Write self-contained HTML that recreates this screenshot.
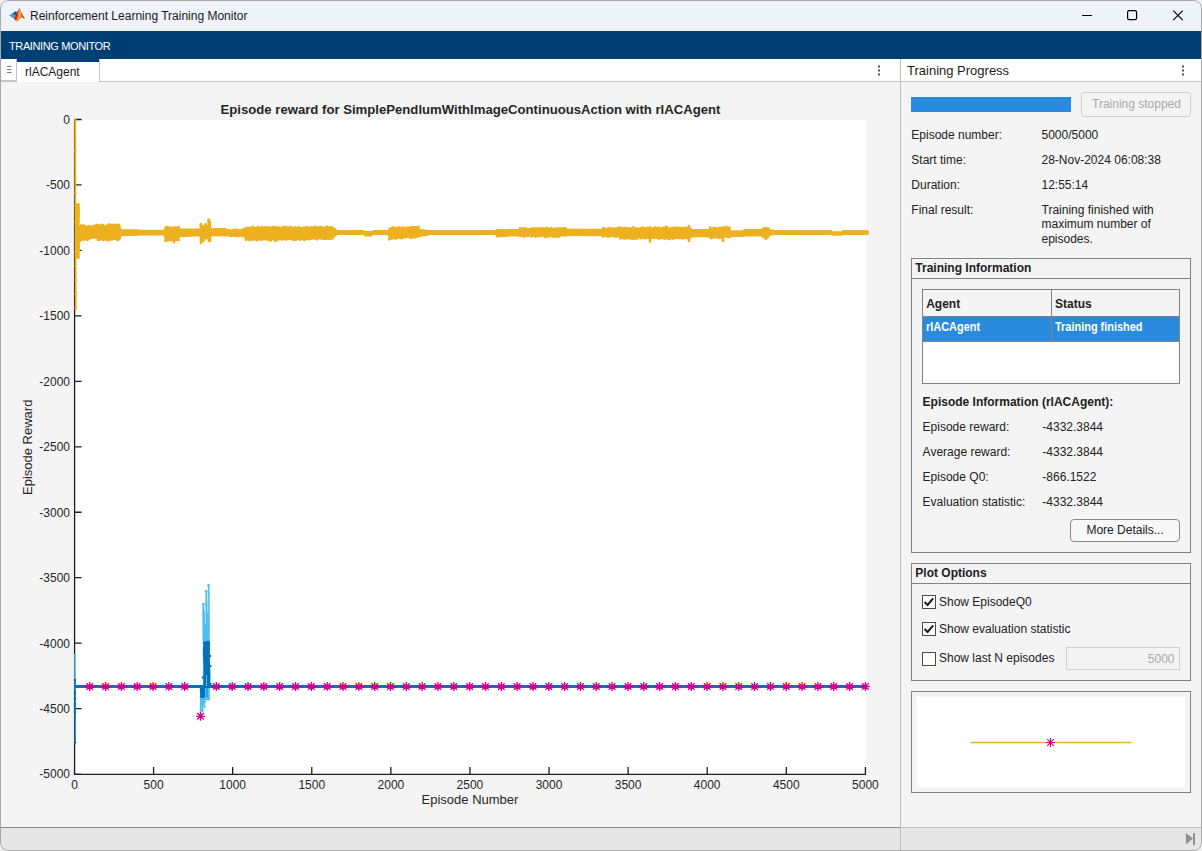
<!DOCTYPE html>
<html><head><meta charset="utf-8">
<style>
*{margin:0;padding:0;box-sizing:border-box}
html,body{width:1202px;height:851px;overflow:hidden;background:#efefef;font-family:"Liberation Sans",sans-serif;color:#212121}
.a{position:absolute}
#win{position:absolute;left:0;top:0;width:1202px;height:851px;background:#f4f4f4;overflow:hidden;border-radius:8px 8px 8px 8px}
.t12{position:absolute;font-size:12px;white-space:nowrap;color:#212121;line-height:14px}
</style></head><body>
<div id="win">
  <!-- title bar -->
  <div class="a" style="left:0;top:0;width:1202px;height:31px;background:#eef2f9"></div>
  <svg class="a" style="left:0;top:0" width="30" height="30" viewBox="0 0 30 30">
    <polygon points="9.2,15.3 12,13.6 14.8,12.6 15.6,15 13.8,18.3 11.2,17" fill="#3f9fe2"/>
    <polygon points="12.8,13.3 15.8,11.2 17.2,12.2 15.6,15 14.2,14.8" fill="#1a4f80"/>
    <polygon points="13.8,18.3 15.6,15 17.5,11.5 19.6,7.9 18.2,15 16.6,21.8" fill="#b8301c"/>
    <polygon points="19.6,7.9 21.2,11.5 22.6,15.2 24.9,18.9 21.6,17.2 18.5,20.5 16.6,21.8 18.2,15" fill="#ec8a30"/>
    <polygon points="19.6,7.9 20.8,11 20.2,17 18.8,19.5 18.2,15" fill="#f3a23d"/>
    <polygon points="21.4,12.5 24.9,18.9 21.6,17.2" fill="#d24f22"/>
    <polygon points="15.4,20.2 18.2,18.6 16.6,21.8" fill="#f2b233"/>
  </svg>
  <div class="t12" style="left:30px;top:9px;color:#1b1b1b">Reinforcement Learning Training Monitor</div>
  <!-- window buttons -->
  <svg class="a" style="left:1070px;top:0" width="132" height="31" viewBox="0 0 132 31">
    <line x1="12" y1="15.5" x2="22" y2="15.5" stroke="#000" stroke-width="1.1"/>
    <rect x="57.6" y="10.6" width="9" height="9" rx="1.6" ry="1.6" fill="none" stroke="#000" stroke-width="1.2"/>
    <path d="M103.2,10.6 L112.8,20.2 M112.8,10.6 L103.2,20.2" stroke="#000" stroke-width="1.15" fill="none"/>
  </svg>
  <!-- toolstrip -->
  <div class="a" style="left:0;top:31px;width:1202px;height:28px;background:#003f73"></div>
  <div class="a" style="left:9px;top:40px;font-size:11px;line-height:12px;color:#fff;letter-spacing:-0.38px;white-space:nowrap">TRAINING MONITOR</div>

  <svg class="a" style="left:0;top:82px" width="900" height="745" viewBox="0 82 900 745" font-family="Liberation Sans, sans-serif"><rect x="75" y="120" width="791" height="654" fill="#ffffff"/><path d="M74.6,119.4 L74.6,774.4 L866,774.4 M74.6,119.50 L81.6,119.50 M74.6,184.96 L81.6,184.96 M74.6,250.42 L81.6,250.42 M74.6,315.88 L81.6,315.88 M74.6,381.34 L81.6,381.34 M74.6,446.80 L81.6,446.80 M74.6,512.26 L81.6,512.26 M74.6,577.72 L81.6,577.72 M74.6,643.18 L81.6,643.18 M74.6,708.64 L81.6,708.64 M74.6,774.10 L81.6,774.10 M74.50,767 L74.50,774.4 M153.59,767 L153.59,774.4 M232.68,767 L232.68,774.4 M311.77,767 L311.77,774.4 M390.86,767 L390.86,774.4 M469.95,767 L469.95,774.4 M549.04,767 L549.04,774.4 M628.13,767 L628.13,774.4 M707.22,767 L707.22,774.4 M786.31,767 L786.31,774.4 M865.40,767 L865.40,774.4" stroke="#1e1e1e" stroke-width="1.3" fill="none" stroke-linejoin="round" stroke-linecap="butt"/><polygon points="76.0,225.6 77.3,225.6 78.6,225.3 79.9,225.8 81.2,225.2 82.5,225.8 83.8,225.4 85.1,225.4 86.4,225.2 87.6,225.4 88.9,225.0 90.2,224.9 91.5,225.6 92.8,225.3 94.1,225.1 95.4,225.5 96.7,224.6 98.0,224.5 99.3,224.8 100.6,224.6 101.9,224.5 103.2,224.8 104.5,225.2 105.8,224.9 107.1,225.1 108.4,224.3 109.8,224.3 111.1,224.8 112.4,225.0 113.7,224.3 115.0,224.4 116.3,224.3 117.6,225.0 118.9,224.7 120.2,225.0 121.5,229.2 122.8,229.2 124.1,229.1 125.5,229.2 126.8,229.2 128.1,229.2 129.4,229.3 130.8,229.2 132.1,229.2 133.4,229.2 134.7,229.3 136.0,229.2 137.4,229.2 138.7,229.2 140.0,229.8 141.3,229.8 142.6,229.8 143.9,229.8 145.3,229.8 146.6,229.9 147.9,229.8 149.2,229.7 150.5,229.8 151.8,229.8 153.2,229.8 154.5,229.8 155.8,229.7 157.1,229.8 158.4,229.9 159.7,229.9 161.1,229.8 162.4,229.8 163.7,229.8 165.0,226.2 166.2,226.4 167.5,226.3 168.8,226.6 170.0,226.4 171.2,226.6 172.5,226.5 173.8,226.7 175.0,226.3 176.2,226.3 177.5,226.7 178.8,226.6 180.0,228.4 181.3,228.6 182.5,228.4 183.8,228.5 185.1,228.5 186.3,228.4 187.6,228.4 188.9,228.6 190.1,228.4 191.4,228.4 192.7,228.4 193.9,228.5 195.2,228.4 196.5,228.3 197.7,228.4 199.0,228.2 200.3,228.4 201.6,228.2 202.9,228.2 204.2,228.2 205.5,228.3 206.8,228.4 208.1,228.2 209.4,228.3 210.7,228.2 212.0,228.3 213.3,228.1 214.6,228.2 215.9,228.0 217.2,228.0 218.5,228.1 219.8,228.1 221.0,228.0 222.3,228.1 223.6,227.9 224.9,227.9 226.2,228.0 227.5,229.7 228.8,229.3 230.2,229.4 231.5,229.5 232.9,229.6 234.2,229.6 235.6,229.6 236.9,229.7 238.3,229.3 239.6,229.5 241.0,229.2 242.3,229.3 243.7,229.2 245.0,226.6 246.3,227.0 247.6,226.7 248.9,226.7 250.2,226.6 251.4,226.7 252.7,226.4 254.0,226.7 255.3,226.7 256.6,226.7 257.9,226.5 259.2,227.1 260.5,226.9 261.8,226.5 263.0,226.5 264.3,226.5 265.6,226.4 266.9,226.3 268.2,226.7 269.5,226.4 270.8,226.8 272.1,226.8 273.4,226.6 274.6,226.4 275.9,227.0 277.2,226.9 278.5,227.1 279.8,226.8 281.1,227.1 282.4,226.9 283.7,227.1 285.0,226.5 286.2,227.3 287.5,226.8 288.8,226.9 290.1,226.9 291.4,226.7 292.7,227.2 294.0,226.5 295.3,227.1 296.6,226.9 297.8,226.5 299.1,226.9 300.4,227.3 301.7,226.7 303.0,226.8 304.3,226.7 305.6,226.7 306.9,226.8 308.2,226.5 309.5,226.6 310.8,226.6 312.0,226.5 313.3,226.6 314.6,226.4 315.9,226.4 317.2,226.4 318.5,226.9 319.8,226.4 321.1,226.4 322.4,226.3 323.7,226.9 325.0,227.1 326.2,226.6 327.5,226.4 328.8,227.1 330.1,226.5 331.4,227.1 332.7,226.6 334.0,227.6 335.2,228.2 336.3,229.0 337.5,229.9 338.8,229.9 340.1,229.9 341.4,229.9 342.7,229.9 344.0,229.9 345.4,229.9 346.7,229.9 348.0,229.9 349.3,229.9 350.6,229.9 351.9,229.9 353.2,229.9 354.5,229.9 355.8,229.9 357.1,229.9 358.5,229.9 359.8,229.9 361.1,229.9 362.4,229.9 363.7,229.9 365.0,230.9 366.3,231.0 367.7,231.0 369.0,231.0 370.3,231.1 371.7,231.0 373.0,229.9 374.3,229.9 375.7,229.9 377.0,229.9 378.3,229.9 379.7,229.9 381.0,229.9 382.3,229.9 383.7,229.9 385.0,229.9 386.3,229.9 387.7,229.9 389.0,227.8 390.3,227.3 391.6,227.0 392.9,227.0 394.2,227.0 395.5,226.9 396.8,227.0 398.0,227.2 399.3,226.9 400.6,227.4 401.9,227.3 403.2,226.9 404.5,227.2 405.8,226.5 407.1,226.4 408.4,226.5 409.7,226.7 411.0,226.7 412.2,226.9 413.5,226.4 414.8,226.1 416.1,226.1 417.4,226.2 418.7,226.3 420.0,228.9 421.3,229.2 422.6,229.2 423.9,229.3 425.1,229.6 426.4,229.7 427.7,229.7 429.0,229.9 430.3,229.9 431.6,229.9 432.9,229.9 434.2,229.9 435.5,229.9 436.8,229.9 438.1,229.9 439.4,229.9 440.7,229.9 442.0,229.9 443.3,229.9 444.6,229.9 445.9,229.9 447.2,229.9 448.5,229.9 449.8,229.9 451.1,229.9 452.4,229.9 453.7,229.9 455.0,229.9 456.3,229.9 457.6,229.9 458.9,229.9 460.2,229.9 461.5,229.9 462.8,229.9 464.0,229.9 465.3,229.9 466.6,229.9 467.9,229.9 469.2,229.9 470.5,229.9 471.8,229.9 473.1,229.9 474.4,229.9 475.7,229.9 477.0,229.9 478.3,229.9 479.6,229.9 480.9,229.9 482.2,229.9 483.5,229.9 484.8,229.9 486.1,229.9 487.4,229.9 488.7,229.9 490.0,229.9 491.3,229.9 492.6,229.9 493.9,229.9 495.2,229.9 496.5,228.9 497.8,228.8 499.1,228.9 500.3,229.0 501.6,229.1 502.9,229.0 504.2,229.0 505.4,229.2 506.7,229.2 508.0,228.9 509.3,229.0 510.7,229.0 512.0,228.9 513.3,228.9 514.7,229.1 516.0,229.1 517.3,229.1 518.7,229.0 520.0,227.8 521.3,227.9 522.6,227.7 523.9,227.7 525.2,227.5 526.5,227.9 527.8,228.0 529.1,228.1 530.4,228.0 531.6,227.7 532.9,227.6 534.2,227.5 535.5,227.9 536.8,228.0 538.1,228.1 539.4,228.0 540.7,227.7 542.0,227.8 543.3,227.7 544.6,228.0 545.9,227.7 547.2,227.6 548.5,228.1 549.8,228.0 551.1,227.7 552.4,227.8 553.7,227.9 555.0,227.7 556.2,227.7 557.5,227.6 558.8,228.0 560.1,227.9 561.4,227.8 562.7,227.6 564.0,227.6 565.3,227.6 566.6,228.4 567.9,228.4 569.2,228.8 570.5,228.7 571.8,228.5 573.1,228.5 574.4,228.6 575.7,228.6 577.0,228.7 578.3,228.7 579.6,228.5 580.9,228.6 582.2,228.8 583.5,228.7 584.8,228.7 586.1,228.8 587.4,228.8 588.7,228.9 590.0,228.8 591.3,228.7 592.6,228.6 593.9,228.9 595.2,228.8 596.5,228.7 597.8,228.8 599.1,228.8 600.4,228.7 601.7,228.9 603.0,227.8 604.3,228.0 605.6,227.9 606.9,227.8 608.2,227.7 609.5,227.7 610.8,227.7 612.2,227.8 613.5,227.6 614.8,227.8 616.1,228.0 617.4,227.6 618.7,227.7 620.0,227.1 621.3,227.4 622.6,226.9 623.9,227.0 625.2,227.7 626.5,227.5 627.9,227.0 629.2,227.5 630.5,227.0 631.8,227.2 633.1,227.0 634.4,227.3 635.7,227.3 637.0,227.2 638.3,227.4 639.6,227.7 640.9,227.3 642.3,227.2 643.6,227.5 644.9,227.6 646.2,227.1 647.5,227.6 648.8,227.4 650.1,227.3 651.4,227.4 652.7,227.4 654.0,227.4 655.3,227.5 656.7,227.7 658.0,227.4 659.3,227.4 660.6,227.6 661.9,227.2 663.2,227.3 664.5,226.9 665.8,226.9 667.1,227.1 668.4,227.5 669.7,227.5 671.1,227.5 672.4,226.9 673.7,227.3 675.0,227.0 676.3,227.2 677.6,227.6 678.9,227.5 680.2,227.6 681.5,227.2 682.8,227.6 684.1,227.6 685.5,227.6 686.8,227.5 688.1,227.6 689.4,227.1 690.7,227.0 692.0,229.0 693.3,229.1 694.6,228.9 695.9,229.2 697.1,229.0 698.4,229.0 699.7,228.9 701.0,229.1 702.3,229.0 703.6,229.0 704.9,228.8 706.1,228.9 707.4,229.1 708.7,228.9 710.0,227.2 711.3,227.6 712.6,227.2 713.9,227.6 715.2,226.9 716.6,227.6 717.9,227.6 719.2,227.5 720.5,227.5 721.8,227.5 723.1,227.2 724.4,227.4 725.8,226.8 727.1,226.8 728.4,226.8 729.7,227.3 731.0,230.4 732.3,230.3 733.6,230.4 734.9,230.3 736.2,230.2 737.5,230.4 738.8,230.2 740.1,230.2 741.4,230.2 742.7,230.4 744.0,228.9 745.3,228.9 746.5,228.9 747.8,228.9 749.1,229.1 750.3,229.0 751.6,228.9 752.9,229.0 754.1,229.1 755.4,228.9 756.7,229.1 757.9,229.1 759.2,229.1 760.5,229.1 761.7,228.9 763.0,228.4 764.4,228.1 765.8,228.3 767.2,228.2 768.6,228.4 770.0,229.5 771.2,229.5 772.5,229.6 773.8,229.8 775.0,229.9 776.3,229.9 777.6,229.9 778.9,229.9 780.2,229.9 781.5,229.9 782.9,229.9 784.2,229.9 785.5,229.9 786.8,230.0 788.1,229.9 789.4,230.0 790.7,230.0 792.0,229.9 793.3,229.9 794.6,229.9 795.9,229.9 797.3,229.9 798.6,230.0 799.9,229.9 801.2,229.9 802.5,230.0 803.8,230.0 805.1,229.9 806.4,230.0 807.7,229.9 809.0,230.0 810.3,229.9 811.7,229.9 813.0,230.0 814.3,230.0 815.6,229.9 816.9,230.0 818.2,230.0 819.5,230.0 820.8,230.0 822.1,230.0 823.4,230.0 824.7,230.0 826.1,230.0 827.4,230.0 828.7,230.0 830.0,230.0 831.3,230.0 832.6,231.3 833.9,231.3 835.1,231.3 836.4,231.3 837.6,231.3 838.9,231.3 840.1,231.3 841.4,231.3 842.6,230.0 843.9,230.0 845.3,230.0 846.6,230.0 847.9,230.0 849.2,230.0 850.6,230.0 851.9,230.0 853.2,230.0 854.5,230.0 855.9,230.0 857.2,230.0 858.5,230.0 859.9,230.0 861.2,230.0 862.5,230.0 863.8,230.0 865.2,230.0 866.5,230.0 866.5,235.0 865.2,235.0 863.8,235.0 862.5,235.0 861.2,235.0 859.9,235.0 858.5,235.0 857.2,235.0 855.9,235.0 854.5,235.0 853.2,235.0 851.9,235.0 850.6,235.0 849.2,235.0 847.9,235.0 846.6,235.0 845.3,235.0 843.9,235.0 842.6,235.0 841.4,235.7 840.1,235.7 838.9,235.7 837.6,235.7 836.4,235.7 835.1,235.7 833.9,235.7 832.6,235.7 831.3,235.0 830.0,235.0 828.7,235.0 827.4,234.9 826.1,235.0 824.7,235.0 823.4,235.0 822.1,235.0 820.8,235.0 819.5,235.0 818.2,235.0 816.9,235.0 815.6,235.0 814.3,235.0 813.0,234.9 811.7,235.0 810.3,235.0 809.0,234.9 807.7,235.0 806.4,234.9 805.1,235.0 803.8,235.0 802.5,235.0 801.2,234.9 799.9,235.0 798.6,234.9 797.3,234.9 795.9,234.9 794.6,235.0 793.3,234.9 792.0,234.9 790.7,235.0 789.4,234.9 788.1,234.9 786.8,234.9 785.5,234.9 784.2,234.9 782.9,234.9 781.5,234.9 780.2,234.9 778.9,234.9 777.6,234.9 776.3,234.9 775.0,234.9 773.8,235.3 772.5,235.6 771.2,235.7 770.0,235.8 768.6,238.6 767.2,238.5 765.8,238.4 764.4,238.6 763.0,238.6 761.7,236.4 760.5,236.5 759.2,236.4 757.9,236.4 756.7,236.4 755.4,236.4 754.1,236.6 752.9,236.6 751.6,236.4 750.3,236.4 749.1,236.4 747.8,236.6 746.5,236.6 745.3,236.6 744.0,236.5 742.7,237.0 741.4,236.9 740.1,237.0 738.8,237.1 737.5,237.0 736.2,236.9 734.9,236.9 733.6,237.0 732.3,237.0 731.0,237.0 729.7,237.4 728.4,236.8 727.1,237.1 725.8,237.2 724.4,237.6 723.1,238.0 721.8,237.9 720.5,237.5 719.2,238.0 717.9,237.7 716.6,238.4 715.2,238.2 713.9,238.0 712.6,238.7 711.3,238.4 710.0,238.5 708.7,237.4 707.4,237.5 706.1,237.2 704.9,237.6 703.6,237.3 702.3,237.4 701.0,237.3 699.7,237.3 698.4,237.3 697.1,237.4 695.9,237.6 694.6,237.4 693.3,237.5 692.0,237.2 690.7,238.8 689.4,239.1 688.1,238.7 686.8,239.4 685.5,239.1 684.1,239.3 682.8,238.8 681.5,239.2 680.2,239.1 678.9,239.3 677.6,239.1 676.3,238.9 675.0,239.3 673.7,238.6 672.4,238.8 671.1,238.6 669.7,239.0 668.4,239.3 667.1,239.2 665.8,239.3 664.5,238.6 663.2,238.9 661.9,239.1 660.6,239.1 659.3,239.4 658.0,238.8 656.7,239.1 655.3,238.6 654.0,239.2 652.7,239.1 651.4,239.1 650.1,238.6 648.8,239.3 647.5,238.8 646.2,239.0 644.9,238.8 643.6,238.7 642.3,239.3 640.9,239.4 639.6,238.8 638.3,238.6 637.0,238.9 635.7,239.1 634.4,239.0 633.1,239.0 631.8,239.3 630.5,239.2 629.2,239.4 627.9,239.4 626.5,238.9 625.2,239.1 623.9,239.3 622.6,239.3 621.3,238.9 620.0,238.8 618.7,236.8 617.4,237.0 616.1,237.0 614.8,236.8 613.5,236.9 612.2,236.7 610.8,236.7 609.5,236.7 608.2,236.9 606.9,236.8 605.6,236.8 604.3,236.8 603.0,237.0 601.7,236.1 600.4,236.2 599.1,236.3 597.8,236.1 596.5,236.1 595.2,236.0 593.9,236.2 592.6,236.1 591.3,236.2 590.0,236.1 588.7,236.2 587.4,236.2 586.1,236.3 584.8,236.0 583.5,236.2 582.2,236.1 580.9,236.2 579.6,236.1 578.3,236.1 577.0,236.1 575.7,236.2 574.4,235.9 573.1,236.0 571.8,236.2 570.5,236.1 569.2,236.2 567.9,236.1 566.6,236.3 565.3,236.7 564.0,236.6 562.7,236.6 561.4,236.6 560.1,236.9 558.8,236.9 557.5,236.8 556.2,237.0 555.0,237.0 553.7,237.0 552.4,236.6 551.1,237.1 549.8,236.6 548.5,236.5 547.2,237.0 545.9,236.9 544.6,236.9 543.3,236.7 542.0,236.5 540.7,236.6 539.4,236.9 538.1,236.6 536.8,237.0 535.5,236.9 534.2,236.5 532.9,236.5 531.6,236.6 530.4,236.8 529.1,236.8 527.8,236.9 526.5,236.7 525.2,236.7 523.9,236.9 522.6,236.8 521.3,236.9 520.0,236.6 518.7,236.6 517.3,236.6 516.0,236.4 514.7,236.6 513.3,236.4 512.0,236.4 510.7,236.6 509.3,236.5 508.0,236.4 506.7,237.2 505.4,236.9 504.2,237.0 502.9,237.1 501.6,237.0 500.3,237.2 499.1,237.5 497.8,237.4 496.5,237.4 495.2,234.9 493.9,234.9 492.6,234.9 491.3,234.9 490.0,234.9 488.7,234.9 487.4,234.9 486.1,234.9 484.8,234.9 483.5,234.9 482.2,234.9 480.9,234.9 479.6,234.9 478.3,234.9 477.0,234.9 475.7,234.9 474.4,234.9 473.1,234.9 471.8,234.9 470.5,234.9 469.2,234.9 467.9,234.9 466.6,234.9 465.3,234.9 464.0,234.9 462.8,234.9 461.5,234.9 460.2,234.9 458.9,234.9 457.6,234.9 456.3,234.9 455.0,234.9 453.7,234.9 452.4,234.9 451.1,234.9 449.8,234.9 448.5,234.9 447.2,234.9 445.9,234.9 444.6,234.9 443.3,234.9 442.0,234.9 440.7,234.9 439.4,234.9 438.1,234.9 436.8,234.9 435.5,234.9 434.2,234.9 432.9,234.9 431.6,234.9 430.3,234.9 429.0,234.9 427.7,235.8 426.4,235.9 425.1,236.0 423.9,236.2 422.6,236.6 421.3,236.8 420.0,237.1 418.7,237.2 417.4,237.3 416.1,237.6 414.8,237.6 413.5,237.4 412.2,238.0 411.0,238.1 409.7,237.6 408.4,237.8 407.1,238.2 405.8,238.1 404.5,238.0 403.2,238.2 401.9,238.5 400.6,238.5 399.3,238.8 398.0,238.8 396.8,239.0 395.5,239.3 394.2,238.7 392.9,239.0 391.6,239.4 390.3,239.2 389.0,239.6 387.7,234.9 386.3,234.9 385.0,234.9 383.7,234.9 382.3,234.9 381.0,234.9 379.7,234.9 378.3,234.9 377.0,234.9 375.7,234.9 374.3,234.9 373.0,234.9 371.7,236.5 370.3,236.5 369.0,236.4 367.7,236.6 366.3,236.5 365.0,236.5 363.7,234.9 362.4,234.9 361.1,234.9 359.8,234.9 358.5,234.9 357.1,234.9 355.8,234.9 354.5,234.9 353.2,234.9 351.9,234.9 350.6,234.9 349.3,234.9 348.0,234.9 346.7,234.9 345.4,234.9 344.0,234.9 342.7,234.9 341.4,234.9 340.1,234.9 338.8,234.9 337.5,234.9 336.3,235.9 335.2,236.8 334.0,237.5 332.7,238.9 331.4,239.0 330.1,238.7 328.8,238.9 327.5,239.4 326.2,238.8 325.0,239.4 323.7,239.7 322.4,239.2 321.1,239.3 319.8,239.2 318.5,239.4 317.2,240.1 315.9,240.0 314.6,239.4 313.3,239.6 312.0,239.5 310.8,239.8 309.5,240.5 308.2,239.9 306.9,239.9 305.6,240.2 304.3,240.0 303.0,240.6 301.7,240.3 300.4,240.6 299.1,240.4 297.8,239.9 296.6,240.7 295.3,240.6 294.0,240.1 292.7,240.2 291.4,240.1 290.1,240.0 288.8,240.0 287.5,240.0 286.2,240.1 285.0,240.3 283.7,240.4 282.4,240.5 281.1,240.4 279.8,240.0 278.5,240.1 277.2,240.2 275.9,240.7 274.6,240.5 273.4,240.0 272.1,239.9 270.8,240.6 269.5,240.3 268.2,240.1 266.9,240.3 265.6,240.7 264.3,240.3 263.0,240.5 261.8,240.5 260.5,240.4 259.2,240.3 257.9,239.9 256.6,240.3 255.3,239.9 254.0,240.4 252.7,239.9 251.4,240.7 250.2,240.6 248.9,240.5 247.6,239.9 246.3,240.2 245.0,240.5 243.7,236.5 242.3,236.7 241.0,236.6 239.6,236.5 238.3,236.5 236.9,236.6 235.6,236.4 234.2,236.4 232.9,236.6 231.5,236.3 230.2,236.3 228.8,236.1 227.5,236.1 226.2,236.3 224.9,236.3 223.6,236.2 222.3,236.3 221.0,236.2 219.8,236.4 218.5,236.2 217.2,236.4 215.9,236.4 214.6,236.3 213.3,236.3 212.0,236.2 210.7,236.4 209.4,236.6 208.1,236.6 206.8,236.4 205.5,236.6 204.2,236.4 202.9,236.6 201.6,236.4 200.3,236.6 199.0,236.6 197.7,236.5 196.5,236.6 195.2,236.6 193.9,236.6 192.7,236.7 191.4,236.7 190.1,236.8 188.9,236.9 187.6,236.9 186.3,237.1 185.1,237.1 183.8,237.0 182.5,237.1 181.3,237.2 180.0,237.2 178.8,240.7 177.5,240.9 176.2,241.5 175.0,241.3 173.8,241.2 172.5,241.3 171.2,240.9 170.0,241.2 168.8,241.1 167.5,241.4 166.2,241.8 165.0,241.2 163.7,235.6 162.4,235.6 161.1,235.6 159.7,235.6 158.4,235.6 157.1,235.6 155.8,235.7 154.5,235.5 153.2,235.6 151.8,235.7 150.5,235.5 149.2,235.7 147.9,235.5 146.6,235.6 145.3,235.6 143.9,235.7 142.6,235.6 141.3,235.6 140.0,235.6 138.7,235.8 137.4,235.7 136.0,235.9 134.7,235.9 133.4,235.9 132.1,235.9 130.8,236.0 129.4,236.1 128.1,236.2 126.8,236.2 125.5,236.1 124.1,236.1 122.8,236.2 121.5,236.3 120.2,240.4 118.9,240.3 117.6,240.3 116.3,240.2 115.0,239.8 113.7,239.9 112.4,240.8 111.1,240.0 109.8,240.1 108.4,240.1 107.1,240.8 105.8,240.1 104.5,240.7 103.2,240.4 101.9,240.4 100.6,240.6 99.3,241.1 98.0,240.6 96.7,238.1 95.4,238.6 94.1,238.7 92.8,238.7 91.5,238.7 90.2,239.2 88.9,239.2 87.6,239.7 86.4,239.9 85.1,239.6 83.8,240.0 82.5,239.8 81.2,240.6 79.9,240.9 78.6,240.3 77.3,240.4 76.0,240.7" fill="#EDB120"/><circle cx="866.5" cy="232.5" r="2.5" fill="#EDB120"/><circle cx="76.0" cy="240.3" r="1.2" fill="#EDB120"/><circle cx="77.3" cy="240.0" r="1.2" fill="#EDB120"/><circle cx="78.6" cy="226.1" r="1.2" fill="#EDB120"/><circle cx="78.6" cy="239.6" r="1.2" fill="#EDB120"/><circle cx="79.9" cy="241.0" r="1.2" fill="#EDB120"/><circle cx="81.2" cy="225.2" r="1.2" fill="#EDB120"/><circle cx="81.2" cy="240.0" r="1.2" fill="#EDB120"/><circle cx="83.8" cy="225.3" r="1.2" fill="#EDB120"/><circle cx="83.8" cy="239.8" r="1.2" fill="#EDB120"/><circle cx="86.4" cy="239.5" r="1.2" fill="#EDB120"/><circle cx="87.6" cy="239.9" r="1.2" fill="#EDB120"/><circle cx="88.9" cy="238.7" r="1.2" fill="#EDB120"/><circle cx="94.1" cy="225.7" r="1.2" fill="#EDB120"/><circle cx="95.4" cy="225.8" r="1.2" fill="#EDB120"/><circle cx="96.7" cy="224.6" r="1.2" fill="#EDB120"/><circle cx="96.7" cy="238.0" r="1.2" fill="#EDB120"/><circle cx="98.0" cy="225.3" r="1.2" fill="#EDB120"/><circle cx="98.0" cy="240.1" r="1.2" fill="#EDB120"/><circle cx="100.6" cy="225.4" r="1.2" fill="#EDB120"/><circle cx="101.9" cy="224.6" r="1.2" fill="#EDB120"/><circle cx="103.2" cy="225.1" r="1.2" fill="#EDB120"/><circle cx="103.2" cy="240.1" r="1.2" fill="#EDB120"/><circle cx="107.1" cy="225.4" r="1.2" fill="#EDB120"/><circle cx="107.1" cy="240.5" r="1.2" fill="#EDB120"/><circle cx="108.4" cy="224.4" r="1.2" fill="#EDB120"/><circle cx="108.4" cy="239.2" r="1.2" fill="#EDB120"/><circle cx="109.8" cy="224.5" r="1.2" fill="#EDB120"/><circle cx="109.8" cy="240.1" r="1.2" fill="#EDB120"/><circle cx="111.1" cy="225.0" r="1.2" fill="#EDB120"/><circle cx="111.1" cy="239.2" r="1.2" fill="#EDB120"/><circle cx="113.7" cy="224.4" r="1.2" fill="#EDB120"/><circle cx="116.3" cy="224.8" r="1.2" fill="#EDB120"/><circle cx="117.6" cy="225.2" r="1.2" fill="#EDB120"/><circle cx="117.6" cy="240.2" r="1.2" fill="#EDB120"/><circle cx="118.9" cy="224.8" r="1.2" fill="#EDB120"/><circle cx="165.0" cy="240.7" r="1.2" fill="#EDB120"/><circle cx="166.2" cy="227.2" r="1.2" fill="#EDB120"/><circle cx="167.5" cy="226.7" r="1.2" fill="#EDB120"/><circle cx="167.5" cy="240.5" r="1.2" fill="#EDB120"/><circle cx="171.2" cy="240.3" r="1.2" fill="#EDB120"/><circle cx="178.8" cy="226.9" r="1.2" fill="#EDB120"/><circle cx="178.8" cy="240.0" r="1.2" fill="#EDB120"/><circle cx="227.5" cy="235.6" r="1.2" fill="#EDB120"/><circle cx="228.8" cy="229.9" r="1.2" fill="#EDB120"/><circle cx="230.2" cy="236.1" r="1.2" fill="#EDB120"/><circle cx="231.5" cy="235.9" r="1.2" fill="#EDB120"/><circle cx="232.9" cy="230.2" r="1.2" fill="#EDB120"/><circle cx="234.2" cy="229.7" r="1.2" fill="#EDB120"/><circle cx="234.2" cy="235.7" r="1.2" fill="#EDB120"/><circle cx="235.6" cy="229.8" r="1.2" fill="#EDB120"/><circle cx="236.9" cy="229.9" r="1.2" fill="#EDB120"/><circle cx="236.9" cy="236.2" r="1.2" fill="#EDB120"/><circle cx="238.3" cy="230.0" r="1.2" fill="#EDB120"/><circle cx="239.6" cy="236.0" r="1.2" fill="#EDB120"/><circle cx="242.3" cy="229.5" r="1.2" fill="#EDB120"/><circle cx="242.3" cy="236.2" r="1.2" fill="#EDB120"/><circle cx="243.7" cy="229.4" r="1.2" fill="#EDB120"/><circle cx="246.3" cy="227.9" r="1.2" fill="#EDB120"/><circle cx="246.3" cy="240.0" r="1.2" fill="#EDB120"/><circle cx="248.9" cy="240.1" r="1.2" fill="#EDB120"/><circle cx="252.7" cy="226.7" r="1.2" fill="#EDB120"/><circle cx="252.7" cy="239.8" r="1.2" fill="#EDB120"/><circle cx="256.6" cy="240.2" r="1.2" fill="#EDB120"/><circle cx="257.9" cy="227.1" r="1.2" fill="#EDB120"/><circle cx="257.9" cy="239.8" r="1.2" fill="#EDB120"/><circle cx="259.2" cy="227.5" r="1.2" fill="#EDB120"/><circle cx="260.5" cy="239.6" r="1.2" fill="#EDB120"/><circle cx="261.8" cy="227.0" r="1.2" fill="#EDB120"/><circle cx="261.8" cy="239.6" r="1.2" fill="#EDB120"/><circle cx="265.6" cy="227.3" r="1.2" fill="#EDB120"/><circle cx="268.2" cy="227.6" r="1.2" fill="#EDB120"/><circle cx="268.2" cy="239.8" r="1.2" fill="#EDB120"/><circle cx="269.5" cy="240.3" r="1.2" fill="#EDB120"/><circle cx="270.8" cy="240.7" r="1.2" fill="#EDB120"/><circle cx="272.1" cy="227.2" r="1.2" fill="#EDB120"/><circle cx="273.4" cy="226.8" r="1.2" fill="#EDB120"/><circle cx="274.6" cy="240.6" r="1.2" fill="#EDB120"/><circle cx="275.9" cy="227.3" r="1.2" fill="#EDB120"/><circle cx="275.9" cy="240.8" r="1.2" fill="#EDB120"/><circle cx="277.2" cy="227.1" r="1.2" fill="#EDB120"/><circle cx="277.2" cy="239.3" r="1.2" fill="#EDB120"/><circle cx="278.5" cy="239.5" r="1.2" fill="#EDB120"/><circle cx="279.8" cy="227.7" r="1.2" fill="#EDB120"/><circle cx="282.4" cy="227.6" r="1.2" fill="#EDB120"/><circle cx="283.7" cy="227.0" r="1.2" fill="#EDB120"/><circle cx="285.0" cy="226.7" r="1.2" fill="#EDB120"/><circle cx="286.2" cy="239.7" r="1.2" fill="#EDB120"/><circle cx="287.5" cy="226.9" r="1.2" fill="#EDB120"/><circle cx="290.1" cy="226.8" r="1.2" fill="#EDB120"/><circle cx="290.1" cy="239.1" r="1.2" fill="#EDB120"/><circle cx="292.7" cy="227.6" r="1.2" fill="#EDB120"/><circle cx="292.7" cy="239.6" r="1.2" fill="#EDB120"/><circle cx="294.0" cy="239.7" r="1.2" fill="#EDB120"/><circle cx="295.3" cy="227.2" r="1.2" fill="#EDB120"/><circle cx="295.3" cy="240.1" r="1.2" fill="#EDB120"/><circle cx="299.1" cy="227.2" r="1.2" fill="#EDB120"/><circle cx="300.4" cy="239.8" r="1.2" fill="#EDB120"/><circle cx="304.3" cy="240.1" r="1.2" fill="#EDB120"/><circle cx="305.6" cy="226.9" r="1.2" fill="#EDB120"/><circle cx="306.9" cy="227.2" r="1.2" fill="#EDB120"/><circle cx="308.2" cy="239.3" r="1.2" fill="#EDB120"/><circle cx="310.8" cy="227.5" r="1.2" fill="#EDB120"/><circle cx="314.6" cy="226.7" r="1.2" fill="#EDB120"/><circle cx="317.2" cy="227.2" r="1.2" fill="#EDB120"/><circle cx="317.2" cy="239.4" r="1.2" fill="#EDB120"/><circle cx="319.8" cy="227.0" r="1.2" fill="#EDB120"/><circle cx="321.1" cy="227.3" r="1.2" fill="#EDB120"/><circle cx="321.1" cy="238.4" r="1.2" fill="#EDB120"/><circle cx="323.7" cy="238.9" r="1.2" fill="#EDB120"/><circle cx="325.0" cy="227.7" r="1.2" fill="#EDB120"/><circle cx="325.0" cy="238.8" r="1.2" fill="#EDB120"/><circle cx="326.2" cy="226.8" r="1.2" fill="#EDB120"/><circle cx="326.2" cy="238.9" r="1.2" fill="#EDB120"/><circle cx="327.5" cy="226.7" r="1.2" fill="#EDB120"/><circle cx="328.8" cy="227.4" r="1.2" fill="#EDB120"/><circle cx="328.8" cy="238.9" r="1.2" fill="#EDB120"/><circle cx="330.1" cy="238.2" r="1.2" fill="#EDB120"/><circle cx="331.4" cy="227.0" r="1.2" fill="#EDB120"/><circle cx="331.4" cy="239.1" r="1.2" fill="#EDB120"/><circle cx="332.7" cy="238.3" r="1.2" fill="#EDB120"/><circle cx="389.0" cy="239.5" r="1.2" fill="#EDB120"/><circle cx="391.6" cy="238.9" r="1.2" fill="#EDB120"/><circle cx="392.9" cy="227.5" r="1.2" fill="#EDB120"/><circle cx="394.2" cy="227.6" r="1.2" fill="#EDB120"/><circle cx="394.2" cy="238.1" r="1.2" fill="#EDB120"/><circle cx="395.5" cy="238.5" r="1.2" fill="#EDB120"/><circle cx="396.8" cy="238.2" r="1.2" fill="#EDB120"/><circle cx="398.0" cy="227.5" r="1.2" fill="#EDB120"/><circle cx="399.3" cy="227.2" r="1.2" fill="#EDB120"/><circle cx="400.6" cy="228.0" r="1.2" fill="#EDB120"/><circle cx="400.6" cy="237.7" r="1.2" fill="#EDB120"/><circle cx="401.9" cy="238.4" r="1.2" fill="#EDB120"/><circle cx="403.2" cy="227.3" r="1.2" fill="#EDB120"/><circle cx="404.5" cy="237.6" r="1.2" fill="#EDB120"/><circle cx="409.7" cy="237.6" r="1.2" fill="#EDB120"/><circle cx="411.0" cy="227.4" r="1.2" fill="#EDB120"/><circle cx="411.0" cy="237.6" r="1.2" fill="#EDB120"/><circle cx="412.2" cy="227.0" r="1.2" fill="#EDB120"/><circle cx="412.2" cy="237.7" r="1.2" fill="#EDB120"/><circle cx="413.5" cy="227.1" r="1.2" fill="#EDB120"/><circle cx="414.8" cy="237.6" r="1.2" fill="#EDB120"/><circle cx="417.4" cy="237.1" r="1.2" fill="#EDB120"/><circle cx="418.7" cy="226.8" r="1.2" fill="#EDB120"/><circle cx="520.0" cy="228.0" r="1.2" fill="#EDB120"/><circle cx="520.0" cy="236.1" r="1.2" fill="#EDB120"/><circle cx="522.6" cy="228.3" r="1.2" fill="#EDB120"/><circle cx="523.9" cy="236.8" r="1.2" fill="#EDB120"/><circle cx="525.2" cy="228.1" r="1.2" fill="#EDB120"/><circle cx="526.5" cy="236.1" r="1.2" fill="#EDB120"/><circle cx="531.6" cy="236.5" r="1.2" fill="#EDB120"/><circle cx="532.9" cy="228.3" r="1.2" fill="#EDB120"/><circle cx="532.9" cy="235.9" r="1.2" fill="#EDB120"/><circle cx="535.5" cy="228.4" r="1.2" fill="#EDB120"/><circle cx="535.5" cy="236.8" r="1.2" fill="#EDB120"/><circle cx="536.8" cy="228.7" r="1.2" fill="#EDB120"/><circle cx="538.1" cy="228.2" r="1.2" fill="#EDB120"/><circle cx="538.1" cy="236.4" r="1.2" fill="#EDB120"/><circle cx="540.7" cy="228.3" r="1.2" fill="#EDB120"/><circle cx="540.7" cy="236.0" r="1.2" fill="#EDB120"/><circle cx="542.0" cy="228.0" r="1.2" fill="#EDB120"/><circle cx="544.6" cy="228.3" r="1.2" fill="#EDB120"/><circle cx="544.6" cy="236.7" r="1.2" fill="#EDB120"/><circle cx="545.9" cy="236.8" r="1.2" fill="#EDB120"/><circle cx="547.2" cy="227.6" r="1.2" fill="#EDB120"/><circle cx="547.2" cy="236.8" r="1.2" fill="#EDB120"/><circle cx="549.8" cy="236.4" r="1.2" fill="#EDB120"/><circle cx="551.1" cy="227.9" r="1.2" fill="#EDB120"/><circle cx="552.4" cy="236.4" r="1.2" fill="#EDB120"/><circle cx="553.7" cy="236.5" r="1.2" fill="#EDB120"/><circle cx="555.0" cy="228.4" r="1.2" fill="#EDB120"/><circle cx="555.0" cy="236.4" r="1.2" fill="#EDB120"/><circle cx="556.2" cy="236.9" r="1.2" fill="#EDB120"/><circle cx="558.8" cy="228.2" r="1.2" fill="#EDB120"/><circle cx="558.8" cy="236.7" r="1.2" fill="#EDB120"/><circle cx="560.1" cy="228.3" r="1.2" fill="#EDB120"/><circle cx="562.7" cy="228.2" r="1.2" fill="#EDB120"/><circle cx="564.0" cy="227.9" r="1.2" fill="#EDB120"/><circle cx="565.3" cy="228.3" r="1.2" fill="#EDB120"/><circle cx="603.0" cy="228.2" r="1.2" fill="#EDB120"/><circle cx="603.0" cy="236.8" r="1.2" fill="#EDB120"/><circle cx="604.3" cy="228.5" r="1.2" fill="#EDB120"/><circle cx="606.9" cy="236.5" r="1.2" fill="#EDB120"/><circle cx="608.2" cy="228.4" r="1.2" fill="#EDB120"/><circle cx="608.2" cy="236.3" r="1.2" fill="#EDB120"/><circle cx="609.5" cy="228.0" r="1.2" fill="#EDB120"/><circle cx="609.5" cy="236.5" r="1.2" fill="#EDB120"/><circle cx="610.8" cy="228.3" r="1.2" fill="#EDB120"/><circle cx="612.2" cy="236.1" r="1.2" fill="#EDB120"/><circle cx="614.8" cy="228.5" r="1.2" fill="#EDB120"/><circle cx="614.8" cy="236.5" r="1.2" fill="#EDB120"/><circle cx="616.1" cy="236.6" r="1.2" fill="#EDB120"/><circle cx="617.4" cy="228.2" r="1.2" fill="#EDB120"/><circle cx="617.4" cy="236.5" r="1.2" fill="#EDB120"/><circle cx="618.7" cy="227.8" r="1.2" fill="#EDB120"/><circle cx="620.0" cy="227.5" r="1.2" fill="#EDB120"/><circle cx="620.0" cy="238.5" r="1.2" fill="#EDB120"/><circle cx="623.9" cy="238.4" r="1.2" fill="#EDB120"/><circle cx="625.2" cy="227.7" r="1.2" fill="#EDB120"/><circle cx="625.2" cy="238.5" r="1.2" fill="#EDB120"/><circle cx="626.5" cy="228.4" r="1.2" fill="#EDB120"/><circle cx="631.8" cy="238.7" r="1.2" fill="#EDB120"/><circle cx="633.1" cy="227.3" r="1.2" fill="#EDB120"/><circle cx="633.1" cy="238.6" r="1.2" fill="#EDB120"/><circle cx="634.4" cy="239.0" r="1.2" fill="#EDB120"/><circle cx="637.0" cy="238.7" r="1.2" fill="#EDB120"/><circle cx="640.9" cy="227.9" r="1.2" fill="#EDB120"/><circle cx="642.3" cy="227.5" r="1.2" fill="#EDB120"/><circle cx="643.6" cy="227.9" r="1.2" fill="#EDB120"/><circle cx="644.9" cy="238.4" r="1.2" fill="#EDB120"/><circle cx="647.5" cy="227.7" r="1.2" fill="#EDB120"/><circle cx="648.8" cy="228.1" r="1.2" fill="#EDB120"/><circle cx="650.1" cy="227.2" r="1.2" fill="#EDB120"/><circle cx="650.1" cy="238.6" r="1.2" fill="#EDB120"/><circle cx="654.0" cy="228.0" r="1.2" fill="#EDB120"/><circle cx="655.3" cy="227.4" r="1.2" fill="#EDB120"/><circle cx="656.7" cy="228.4" r="1.2" fill="#EDB120"/><circle cx="658.0" cy="227.7" r="1.2" fill="#EDB120"/><circle cx="658.0" cy="238.3" r="1.2" fill="#EDB120"/><circle cx="659.3" cy="227.9" r="1.2" fill="#EDB120"/><circle cx="659.3" cy="238.6" r="1.2" fill="#EDB120"/><circle cx="660.6" cy="238.1" r="1.2" fill="#EDB120"/><circle cx="663.2" cy="227.8" r="1.2" fill="#EDB120"/><circle cx="663.2" cy="238.1" r="1.2" fill="#EDB120"/><circle cx="664.5" cy="238.7" r="1.2" fill="#EDB120"/><circle cx="665.8" cy="226.8" r="1.2" fill="#EDB120"/><circle cx="667.1" cy="227.0" r="1.2" fill="#EDB120"/><circle cx="668.4" cy="239.1" r="1.2" fill="#EDB120"/><circle cx="669.7" cy="239.1" r="1.2" fill="#EDB120"/><circle cx="671.1" cy="228.1" r="1.2" fill="#EDB120"/><circle cx="672.4" cy="238.8" r="1.2" fill="#EDB120"/><circle cx="673.7" cy="227.8" r="1.2" fill="#EDB120"/><circle cx="673.7" cy="238.4" r="1.2" fill="#EDB120"/><circle cx="675.0" cy="227.5" r="1.2" fill="#EDB120"/><circle cx="677.6" cy="227.5" r="1.2" fill="#EDB120"/><circle cx="678.9" cy="228.0" r="1.2" fill="#EDB120"/><circle cx="680.2" cy="227.9" r="1.2" fill="#EDB120"/><circle cx="682.8" cy="227.7" r="1.2" fill="#EDB120"/><circle cx="682.8" cy="238.5" r="1.2" fill="#EDB120"/><circle cx="684.1" cy="228.3" r="1.2" fill="#EDB120"/><circle cx="685.5" cy="228.4" r="1.2" fill="#EDB120"/><circle cx="686.8" cy="227.4" r="1.2" fill="#EDB120"/><circle cx="710.0" cy="227.1" r="1.2" fill="#EDB120"/><circle cx="711.3" cy="238.3" r="1.2" fill="#EDB120"/><circle cx="713.9" cy="227.7" r="1.2" fill="#EDB120"/><circle cx="713.9" cy="237.2" r="1.2" fill="#EDB120"/><circle cx="716.6" cy="228.1" r="1.2" fill="#EDB120"/><circle cx="716.6" cy="237.6" r="1.2" fill="#EDB120"/><circle cx="719.2" cy="227.9" r="1.2" fill="#EDB120"/><circle cx="719.2" cy="238.0" r="1.2" fill="#EDB120"/><circle cx="720.5" cy="227.7" r="1.2" fill="#EDB120"/><circle cx="720.5" cy="237.5" r="1.2" fill="#EDB120"/><circle cx="721.8" cy="228.1" r="1.2" fill="#EDB120"/><circle cx="723.1" cy="227.3" r="1.2" fill="#EDB120"/><circle cx="724.4" cy="227.9" r="1.2" fill="#EDB120"/><circle cx="725.8" cy="226.8" r="1.2" fill="#EDB120"/><circle cx="727.1" cy="227.4" r="1.2" fill="#EDB120"/><circle cx="727.1" cy="236.9" r="1.2" fill="#EDB120"/><circle cx="728.4" cy="236.8" r="1.2" fill="#EDB120"/><circle cx="729.7" cy="227.7" r="1.2" fill="#EDB120"/><circle cx="729.7" cy="237.4" r="1.2" fill="#EDB120"/><circle cx="763.0" cy="228.7" r="1.2" fill="#EDB120"/><circle cx="764.4" cy="228.3" r="1.2" fill="#EDB120"/><circle cx="765.8" cy="228.5" r="1.2" fill="#EDB120"/><circle cx="767.2" cy="228.7" r="1.2" fill="#EDB120"/><circle cx="768.6" cy="228.5" r="1.2" fill="#EDB120"/><path d="M200.8,224 L201,243 M202.5,226 L202.7,241 M204,227 L204.2,240 M206,225 L206.5,238 M208.6,219.5 L208.8,241 M210,222 L210.2,240.8 M174,239 L174,242.2 M650,238 L650,241.5 M689,226 L689,241.1 M723,236 L723,241 M766,228 L766,239" stroke="#EDB120" stroke-width="2.4" fill="none" stroke-linecap="round"/><circle cx="201.5" cy="229.0" r="1.5" fill="#EDB120"/><circle cx="203.0" cy="236.0" r="1.5" fill="#EDB120"/><circle cx="205.0" cy="231.0" r="1.5" fill="#EDB120"/><circle cx="207.0" cy="227.0" r="1.5" fill="#EDB120"/><circle cx="209.5" cy="233.0" r="1.5" fill="#EDB120"/><circle cx="202.0" cy="239.0" r="1.5" fill="#EDB120"/><circle cx="207.5" cy="238.0" r="1.5" fill="#EDB120"/><circle cx="205.5" cy="224.5" r="1.5" fill="#EDB120"/><circle cx="208.6" cy="220.0" r="1.3" fill="#EDB120"/><circle cx="201.0" cy="242.5" r="1.3" fill="#EDB120"/><circle cx="200.8" cy="224.5" r="1.3" fill="#EDB120"/><circle cx="210.0" cy="240.5" r="1.3" fill="#EDB120"/><circle cx="650.0" cy="241.0" r="1.3" fill="#EDB120"/><circle cx="689.0" cy="240.8" r="1.3" fill="#EDB120"/><circle cx="723.0" cy="240.8" r="1.3" fill="#EDB120"/><path d="M75.2,119.5 L75.4,200 L75.6,260 L75.8,310" stroke="#EDB120" stroke-width="1.8" fill="none"/><polygon points="76,203.5 79.5,203.5 80,215 79,230 80,245 79.5,258.5 76,258.5" fill="#EDB120"/><circle cx="75.5" cy="120" r="1.1" fill="#EDB120"/><circle cx="75.5" cy="128" r="1.1" fill="#EDB120"/><circle cx="75.5" cy="139" r="1.1" fill="#EDB120"/><circle cx="75.5" cy="151" r="1.1" fill="#EDB120"/><circle cx="75.5" cy="164" r="1.1" fill="#EDB120"/><circle cx="75.5" cy="178" r="1.1" fill="#EDB120"/><circle cx="75.5" cy="193" r="1.1" fill="#EDB120"/><circle cx="75.5" cy="206" r="1.1" fill="#EDB120"/><circle cx="75.5" cy="222" r="1.1" fill="#EDB120"/><circle cx="75.5" cy="238" r="1.1" fill="#EDB120"/><circle cx="75.5" cy="252" r="1.1" fill="#EDB120"/><circle cx="75.5" cy="266" r="1.1" fill="#EDB120"/><circle cx="75.5" cy="280" r="1.1" fill="#EDB120"/><circle cx="75.5" cy="294" r="1.1" fill="#EDB120"/><circle cx="75.5" cy="308" r="1.1" fill="#EDB120"/><circle cx="78.5" cy="204.5" r="1.3" fill="#EDB120"/><circle cx="78.5" cy="208.0" r="1.3" fill="#EDB120"/><circle cx="78.5" cy="215.0" r="1.3" fill="#EDB120"/><circle cx="78.5" cy="222.0" r="1.3" fill="#EDB120"/><circle cx="78.5" cy="250.0" r="1.3" fill="#EDB120"/><circle cx="78.5" cy="257.5" r="1.3" fill="#EDB120"/><path d="M74.9,654.5 L74.9,690" stroke="#4DBEEE" stroke-width="1.3" fill="none"/><circle cx="74.9" cy="655" r="1.2" fill="#4DBEEE"/><path d="M203.3,604 L203.6,641 L203.8,690 M206.2,591.4 L206.5,641 L206.2,700 M208.6,585.2 L208.8,641 L208.9,690 M200.4,716 L200.8,700 L201.5,690 M202.5,700 L202.5,712 M205,690 L205,703 M208.6,686 L208.6,700" stroke="#4DBEEE" stroke-width="1.6" fill="none"/><rect x="205.2" y="686" width="4.5" height="14" fill="#4DBEEE"/><rect x="200.5" y="690" width="4.2" height="15" fill="#4DBEEE"/><polygon points="202.6,605 204,604 204.6,612 206,598 207.4,600 208,590 209.4,592 209.6,641 202.6,641" fill="#4DBEEE"/><path d="M205.3,606 L205.3,624 M207.7,596 L207.7,612" stroke="#ffffff" stroke-width="0.7" opacity="0.8"/><circle cx="208.6" cy="585.2" r="1.3" fill="#4DBEEE"/><circle cx="206.2" cy="591.4" r="1.3" fill="#4DBEEE"/><circle cx="203.3" cy="604.0" r="1.3" fill="#4DBEEE"/><circle cx="202.5" cy="710.0" r="1.3" fill="#4DBEEE"/><circle cx="208.2" cy="699.5" r="1.3" fill="#4DBEEE"/><circle cx="203.4" cy="704.0" r="1.3" fill="#4DBEEE"/><circle cx="204.4" cy="706.5" r="1.3" fill="#4DBEEE"/><line x1="74.5" y1="686.50" x2="866.5" y2="686.50" stroke="#0072BD" stroke-width="3.1" /><path d="M75,680 L75,743" stroke="#0072BD" stroke-width="1.4" fill="none"/><circle cx="75" cy="680.0" r="1.3" fill="#0072BD"/><circle cx="75" cy="693.0" r="1.3" fill="#0072BD"/><circle cx="75" cy="699.0" r="1.3" fill="#0072BD"/><circle cx="75" cy="704.0" r="1.3" fill="#0072BD"/><circle cx="75" cy="712.0" r="1.3" fill="#0072BD"/><circle cx="75" cy="742.5" r="1.3" fill="#0072BD"/><polygon points="204,641.5 208.5,640.5 210,642 209.8,660 210.5,675 210.2,686 203.3,686 203.8,670 202.8,650" fill="#0072BD"/><polygon points="199.8,686 205.2,686 205,697 202,698 200,694" fill="#0072BD"/><path d="M207,697 L207,686" stroke="#0072BD" stroke-width="0.8" fill="none"/><circle cx="210.2" cy="656.0" r="1.2" fill="#0072BD"/><circle cx="210.3" cy="666.0" r="1.2" fill="#0072BD"/><circle cx="203.0" cy="677.5" r="1.2" fill="#0072BD"/><circle cx="210.4" cy="684.0" r="1.2" fill="#0072BD"/><circle cx="204.0" cy="643.0" r="1.2" fill="#0072BD"/><circle cx="201.0" cy="696.5" r="1.2" fill="#0072BD"/><circle cx="203.5" cy="697.0" r="1.2" fill="#0072BD"/><path d="M206.5,675 L206.5,686" stroke="#4DBEEE" stroke-width="1" fill="none"/><path d="M85.33,686.50 L94.13,686.50 M89.73,682.10 L89.73,690.90 M86.43,683.20 L93.03,689.80 M86.43,689.80 L93.03,683.20 M101.16,686.50 L109.96,686.50 M105.56,682.10 L105.56,690.90 M102.26,683.20 L108.86,689.80 M102.26,689.80 L108.86,683.20 M116.99,686.50 L125.79,686.50 M121.39,682.10 L121.39,690.90 M118.09,683.20 L124.69,689.80 M118.09,689.80 L124.69,683.20 M132.82,686.50 L141.62,686.50 M137.22,682.10 L137.22,690.90 M133.92,683.20 L140.52,689.80 M133.92,689.80 L140.52,683.20 M148.65,686.50 L157.45,686.50 M153.05,682.10 L153.05,690.90 M149.75,683.20 L156.35,689.80 M149.75,689.80 L156.35,683.20 M164.48,686.50 L173.28,686.50 M168.88,682.10 L168.88,690.90 M165.58,683.20 L172.18,689.80 M165.58,689.80 L172.18,683.20 M180.31,686.50 L189.11,686.50 M184.71,682.10 L184.71,690.90 M181.41,683.20 L188.01,689.80 M181.41,689.80 L188.01,683.20 M196.14,716.30 L204.94,716.30 M200.54,711.90 L200.54,720.70 M197.24,713.00 L203.84,719.60 M197.24,719.60 L203.84,713.00 M211.97,686.50 L220.77,686.50 M216.37,682.10 L216.37,690.90 M213.07,683.20 L219.67,689.80 M213.07,689.80 L219.67,683.20 M227.80,686.50 L236.60,686.50 M232.20,682.10 L232.20,690.90 M228.90,683.20 L235.50,689.80 M228.90,689.80 L235.50,683.20 M243.63,686.50 L252.43,686.50 M248.03,682.10 L248.03,690.90 M244.73,683.20 L251.33,689.80 M244.73,689.80 L251.33,683.20 M259.46,686.50 L268.26,686.50 M263.86,682.10 L263.86,690.90 M260.56,683.20 L267.16,689.80 M260.56,689.80 L267.16,683.20 M275.29,686.50 L284.09,686.50 M279.69,682.10 L279.69,690.90 M276.39,683.20 L282.99,689.80 M276.39,689.80 L282.99,683.20 M291.12,686.50 L299.92,686.50 M295.52,682.10 L295.52,690.90 M292.22,683.20 L298.82,689.80 M292.22,689.80 L298.82,683.20 M306.95,686.50 L315.75,686.50 M311.35,682.10 L311.35,690.90 M308.05,683.20 L314.65,689.80 M308.05,689.80 L314.65,683.20 M322.78,686.50 L331.58,686.50 M327.18,682.10 L327.18,690.90 M323.88,683.20 L330.48,689.80 M323.88,689.80 L330.48,683.20 M338.61,686.50 L347.41,686.50 M343.01,682.10 L343.01,690.90 M339.71,683.20 L346.31,689.80 M339.71,689.80 L346.31,683.20 M354.44,686.50 L363.24,686.50 M358.84,682.10 L358.84,690.90 M355.54,683.20 L362.14,689.80 M355.54,689.80 L362.14,683.20 M370.27,686.50 L379.07,686.50 M374.67,682.10 L374.67,690.90 M371.37,683.20 L377.97,689.80 M371.37,689.80 L377.97,683.20 M386.10,686.50 L394.90,686.50 M390.50,682.10 L390.50,690.90 M387.20,683.20 L393.80,689.80 M387.20,689.80 L393.80,683.20 M401.93,686.50 L410.73,686.50 M406.33,682.10 L406.33,690.90 M403.03,683.20 L409.63,689.80 M403.03,689.80 L409.63,683.20 M417.76,686.50 L426.56,686.50 M422.16,682.10 L422.16,690.90 M418.86,683.20 L425.46,689.80 M418.86,689.80 L425.46,683.20 M433.59,686.50 L442.39,686.50 M437.99,682.10 L437.99,690.90 M434.69,683.20 L441.29,689.80 M434.69,689.80 L441.29,683.20 M449.42,686.50 L458.22,686.50 M453.82,682.10 L453.82,690.90 M450.52,683.20 L457.12,689.80 M450.52,689.80 L457.12,683.20 M465.25,686.50 L474.05,686.50 M469.65,682.10 L469.65,690.90 M466.35,683.20 L472.95,689.80 M466.35,689.80 L472.95,683.20 M481.08,686.50 L489.88,686.50 M485.48,682.10 L485.48,690.90 M482.18,683.20 L488.78,689.80 M482.18,689.80 L488.78,683.20 M496.91,686.50 L505.71,686.50 M501.31,682.10 L501.31,690.90 M498.01,683.20 L504.61,689.80 M498.01,689.80 L504.61,683.20 M512.74,686.50 L521.54,686.50 M517.14,682.10 L517.14,690.90 M513.84,683.20 L520.44,689.80 M513.84,689.80 L520.44,683.20 M528.57,686.50 L537.37,686.50 M532.97,682.10 L532.97,690.90 M529.67,683.20 L536.27,689.80 M529.67,689.80 L536.27,683.20 M544.40,686.50 L553.20,686.50 M548.80,682.10 L548.80,690.90 M545.50,683.20 L552.10,689.80 M545.50,689.80 L552.10,683.20 M560.23,686.50 L569.03,686.50 M564.63,682.10 L564.63,690.90 M561.33,683.20 L567.93,689.80 M561.33,689.80 L567.93,683.20 M576.06,686.50 L584.86,686.50 M580.46,682.10 L580.46,690.90 M577.16,683.20 L583.76,689.80 M577.16,689.80 L583.76,683.20 M591.89,686.50 L600.69,686.50 M596.29,682.10 L596.29,690.90 M592.99,683.20 L599.59,689.80 M592.99,689.80 L599.59,683.20 M607.72,686.50 L616.52,686.50 M612.12,682.10 L612.12,690.90 M608.82,683.20 L615.42,689.80 M608.82,689.80 L615.42,683.20 M623.55,686.50 L632.35,686.50 M627.95,682.10 L627.95,690.90 M624.65,683.20 L631.25,689.80 M624.65,689.80 L631.25,683.20 M639.38,686.50 L648.18,686.50 M643.78,682.10 L643.78,690.90 M640.48,683.20 L647.08,689.80 M640.48,689.80 L647.08,683.20 M655.21,686.50 L664.01,686.50 M659.61,682.10 L659.61,690.90 M656.31,683.20 L662.91,689.80 M656.31,689.80 L662.91,683.20 M671.04,686.50 L679.84,686.50 M675.44,682.10 L675.44,690.90 M672.14,683.20 L678.74,689.80 M672.14,689.80 L678.74,683.20 M686.87,686.50 L695.67,686.50 M691.27,682.10 L691.27,690.90 M687.97,683.20 L694.57,689.80 M687.97,689.80 L694.57,683.20 M702.70,686.50 L711.50,686.50 M707.10,682.10 L707.10,690.90 M703.80,683.20 L710.40,689.80 M703.80,689.80 L710.40,683.20 M718.53,686.50 L727.33,686.50 M722.93,682.10 L722.93,690.90 M719.63,683.20 L726.23,689.80 M719.63,689.80 L726.23,683.20 M734.36,686.50 L743.16,686.50 M738.76,682.10 L738.76,690.90 M735.46,683.20 L742.06,689.80 M735.46,689.80 L742.06,683.20 M750.19,686.50 L758.99,686.50 M754.59,682.10 L754.59,690.90 M751.29,683.20 L757.89,689.80 M751.29,689.80 L757.89,683.20 M766.02,686.50 L774.82,686.50 M770.42,682.10 L770.42,690.90 M767.12,683.20 L773.72,689.80 M767.12,689.80 L773.72,683.20 M781.85,686.50 L790.65,686.50 M786.25,682.10 L786.25,690.90 M782.95,683.20 L789.55,689.80 M782.95,689.80 L789.55,683.20 M797.68,686.50 L806.48,686.50 M802.08,682.10 L802.08,690.90 M798.78,683.20 L805.38,689.80 M798.78,689.80 L805.38,683.20 M813.51,686.50 L822.31,686.50 M817.91,682.10 L817.91,690.90 M814.61,683.20 L821.21,689.80 M814.61,689.80 L821.21,683.20 M829.34,686.50 L838.14,686.50 M833.74,682.10 L833.74,690.90 M830.44,683.20 L837.04,689.80 M830.44,689.80 L837.04,683.20 M845.17,686.50 L853.97,686.50 M849.57,682.10 L849.57,690.90 M846.27,683.20 L852.87,689.80 M846.27,689.80 L852.87,683.20 M861.00,686.50 L869.80,686.50 M865.40,682.10 L865.40,690.90 M862.10,683.20 L868.70,689.80 M862.10,689.80 L868.70,683.20" stroke="#D1008B" stroke-width="1.35" fill="none" stroke-linecap="butt"/><text x="70" y="123.8" text-anchor="end" font-size="12" fill="#262626">0</text><text x="70" y="189.3" text-anchor="end" font-size="12" fill="#262626">-500</text><text x="70" y="254.7" text-anchor="end" font-size="12" fill="#262626">-1000</text><text x="70" y="320.2" text-anchor="end" font-size="12" fill="#262626">-1500</text><text x="70" y="385.6" text-anchor="end" font-size="12" fill="#262626">-2000</text><text x="70" y="451.1" text-anchor="end" font-size="12" fill="#262626">-2500</text><text x="70" y="516.6" text-anchor="end" font-size="12" fill="#262626">-3000</text><text x="70" y="582.0" text-anchor="end" font-size="12" fill="#262626">-3500</text><text x="70" y="647.5" text-anchor="end" font-size="12" fill="#262626">-4000</text><text x="70" y="712.9" text-anchor="end" font-size="12" fill="#262626">-4500</text><text x="70" y="778.4" text-anchor="end" font-size="12" fill="#262626">-5000</text><text x="74.5" y="788.6" text-anchor="middle" font-size="12" fill="#262626">0</text><text x="153.6" y="788.6" text-anchor="middle" font-size="12" fill="#262626">500</text><text x="232.7" y="788.6" text-anchor="middle" font-size="12" fill="#262626">1000</text><text x="311.8" y="788.6" text-anchor="middle" font-size="12" fill="#262626">1500</text><text x="390.9" y="788.6" text-anchor="middle" font-size="12" fill="#262626">2000</text><text x="469.9" y="788.6" text-anchor="middle" font-size="12" fill="#262626">2500</text><text x="549.0" y="788.6" text-anchor="middle" font-size="12" fill="#262626">3000</text><text x="628.1" y="788.6" text-anchor="middle" font-size="12" fill="#262626">3500</text><text x="707.2" y="788.6" text-anchor="middle" font-size="12" fill="#262626">4000</text><text x="786.3" y="788.6" text-anchor="middle" font-size="12" fill="#262626">4500</text><text x="865.4" y="788.6" text-anchor="middle" font-size="12" fill="#262626">5000</text><text x="470" y="803.8" text-anchor="middle" font-size="13" fill="#262626">Episode Number</text><text transform="translate(32.4,447.3) rotate(-90)" text-anchor="middle" font-size="13" fill="#262626">Episode Reward</text><text x="470.5" y="113.6" text-anchor="middle" font-size="13.15" font-weight="bold" fill="#262626">Episode reward for SimplePendlumWithImageContinuousAction with rlACAgent</text></svg>
  <!-- tab row left -->
  <div class="a" style="left:0;top:59px;width:900px;height:23px;background:#fff;border-bottom:1px solid #c4c4c4"></div>
  <div class="a" style="left:1px;top:59px;width:16px;height:22px;background:#fff;border-right:1px solid #c4c4c4;border-bottom:1px solid #c4c4c4"></div>
  <svg class="a" style="left:5px;top:64px" width="8" height="10"><rect x="2" y="2" width="4.5" height="1" fill="#7a7a7a"/><rect x="2" y="5" width="4.5" height="1" fill="#7a7a7a"/><rect x="2" y="8" width="4.5" height="1" fill="#7a7a7a"/></svg>
  <div class="a" style="left:17px;top:59px;width:82px;height:23px;background:#fff;border-top:3px solid #003f73"></div>
  <div class="a" style="left:99px;top:59px;width:1px;height:22px;background:#c4c4c4"></div>
  <div class="t12" style="left:25px;top:65px;color:#1b1b1b">rlACAgent</div>
  <svg class="a" style="left:876px;top:64px" width="6" height="12"><rect x="2" y="1.5" width="2" height="2" fill="#555"/><rect x="2" y="5.5" width="2" height="2" fill="#555"/><rect x="2" y="9.5" width="2" height="2" fill="#555"/></svg>

  <!-- tab row right -->
  <div class="a" style="left:901px;top:59px;width:301px;height:23px;background:#fff;border-bottom:1px solid #c4c4c4"></div>
  <div class="a" style="left:907px;top:63px;font-size:13px;line-height:15px;color:#1b1b1b;white-space:nowrap">Training Progress</div>
  <svg class="a" style="left:1180px;top:64px" width="6" height="12"><rect x="2" y="1.5" width="2" height="2" fill="#555"/><rect x="2" y="5.5" width="2" height="2" fill="#555"/><rect x="2" y="9.5" width="2" height="2" fill="#555"/></svg>

  <div class="a" style="left:911.0px;top:97.0px;width:160.0px;height:15.0px;background:#2a8ade"></div>
<div class="a" style="left:1081.0px;top:92.0px;width:110.0px;height:24.5px;border:1px solid #cfcfcf;border-radius:3px;background:#f4f4f4"></div>
<div class="a" style="left:1092.0px;top:97.44px;font-size:12px;line-height:14px;white-space:nowrap;color:#a8a8a8;">Training stopped</div>
<div class="a" style="left:911.3px;top:128.44px;font-size:12px;line-height:14px;white-space:nowrap;color:#212121;">Episode number:</div>
<div class="a" style="left:1041.5px;top:128.44px;font-size:12px;line-height:14px;white-space:nowrap;color:#212121;">5000/5000</div>
<div class="a" style="left:911.3px;top:153.34px;font-size:12px;line-height:14px;white-space:nowrap;color:#212121;">Start time:</div>
<div class="a" style="left:1041.5px;top:153.34px;font-size:12px;line-height:14px;white-space:nowrap;color:#212121;">28-Nov-2024 06:08:38</div>
<div class="a" style="left:911.3px;top:178.14px;font-size:12px;line-height:14px;white-space:nowrap;color:#212121;">Duration:</div>
<div class="a" style="left:1041.5px;top:178.14px;font-size:12px;line-height:14px;white-space:nowrap;color:#212121;">12:55:14</div>
<div class="a" style="left:911.3px;top:202.74px;font-size:12px;line-height:14px;white-space:nowrap;color:#212121;">Final result:</div>
<div class="a" style="left:1041.5px;top:202.74px;font-size:12px;line-height:14px;white-space:nowrap;color:#212121;">Training finished with</div>
<div class="a" style="left:1041.5px;top:217.24px;font-size:12px;line-height:14px;white-space:nowrap;color:#212121;">maximum number of</div>
<div class="a" style="left:1041.5px;top:231.84px;font-size:12px;line-height:14px;white-space:nowrap;color:#212121;">episodes.</div>
<div class="a" style="left:911.0px;top:258.0px;width:280.0px;height:295.0px;border:1px solid #828282"></div>
<div class="a" style="left:912.0px;top:278.0px;width:278.0px;height:1.0px;background:#828282"></div>
<div class="a" style="left:915.3px;top:260.64px;font-size:12px;line-height:14px;white-space:nowrap;color:#212121;font-weight:bold;">Training Information</div>
<div class="a" style="left:922.0px;top:289.0px;width:258.0px;height:95.0px;border:1px solid #828282;background:#fff"></div>
<div class="a" style="left:923.0px;top:290.0px;width:256.0px;height:26.0px;background:#f4f4f4"></div>
<div class="a" style="left:923.0px;top:316.0px;width:256.0px;height:1.0px;background:#828282"></div>
<div class="a" style="left:923.0px;top:317.0px;width:256.0px;height:24.0px;background:#2a8ade"></div>
<div class="a" style="left:923.0px;top:341.0px;width:256.0px;height:1.0px;background:#828282"></div>
<div class="a" style="left:1051.0px;top:290.0px;width:1.0px;height:51.0px;background:#828282"></div>
<div class="a" style="left:926.2px;top:296.64px;font-size:12px;line-height:14px;white-space:nowrap;color:#212121;font-weight:bold;">Agent</div>
<div class="a" style="left:1055.0px;top:296.64px;font-size:12px;line-height:14px;white-space:nowrap;color:#212121;font-weight:bold;">Status</div>
<div class="a" style="left:926.2px;top:319.74px;font-size:12px;line-height:14px;white-space:nowrap;color:#ffffff;font-weight:bold;transform:scaleX(0.912);transform-origin:0 0;">rlACAgent</div>
<div class="a" style="left:1055.0px;top:319.74px;font-size:12px;line-height:14px;white-space:nowrap;color:#ffffff;font-weight:bold;transform:scaleX(0.912);transform-origin:0 0;">Training finished</div>
<div class="a" style="left:922.6px;top:395.34px;font-size:12px;line-height:14px;white-space:nowrap;color:#212121;font-weight:bold;">Episode Information (rlACAgent):</div>
<div class="a" style="left:922.6px;top:419.54px;font-size:12px;line-height:14px;white-space:nowrap;color:#212121;">Episode reward:</div>
<div class="a" style="left:1042.3px;top:419.54px;font-size:12px;line-height:14px;white-space:nowrap;color:#212121;">-4332.3844</div>
<div class="a" style="left:922.6px;top:444.64px;font-size:12px;line-height:14px;white-space:nowrap;color:#212121;">Average reward:</div>
<div class="a" style="left:1042.3px;top:444.64px;font-size:12px;line-height:14px;white-space:nowrap;color:#212121;">-4332.3844</div>
<div class="a" style="left:922.6px;top:469.54px;font-size:12px;line-height:14px;white-space:nowrap;color:#212121;">Episode Q0:</div>
<div class="a" style="left:1042.3px;top:469.54px;font-size:12px;line-height:14px;white-space:nowrap;color:#212121;">-866.1522</div>
<div class="a" style="left:922.6px;top:495.04px;font-size:12px;line-height:14px;white-space:nowrap;color:#212121;">Evaluation statistic:</div>
<div class="a" style="left:1042.3px;top:495.04px;font-size:12px;line-height:14px;white-space:nowrap;color:#212121;">-4332.3844</div>
<div class="a" style="left:1070.0px;top:519.0px;width:110.0px;height:23.0px;border:1px solid #8a8a8a;border-radius:4px;background:#f7f7f7"></div>
<div class="a" style="left:1086.4px;top:522.64px;font-size:12px;line-height:14px;white-space:nowrap;color:#212121;">More Details...</div>
<div class="a" style="left:911.0px;top:563.0px;width:280.0px;height:118.0px;border:1px solid #828282"></div>
<div class="a" style="left:912.0px;top:583.0px;width:278.0px;height:1.0px;background:#828282"></div>
<div class="a" style="left:915.3px;top:565.94px;font-size:12px;line-height:14px;white-space:nowrap;color:#212121;font-weight:bold;">Plot Options</div>
<div class="a" style="left:922.0px;top:595.0px;width:14.0px;height:14.0px;border:1px solid #4a4a4a;background:#fff"></div>
<svg class="a" style="left:922px;top:595px" width="14" height="14"><path d="M2.6,7 L5.6,10 L11.2,3.4" stroke="#1a1a1a" stroke-width="2" fill="none"/></svg>
<div class="a" style="left:939.0px;top:595.04px;font-size:12px;line-height:14px;white-space:nowrap;color:#212121;">Show EpisodeQ0</div>
<div class="a" style="left:922.0px;top:622.0px;width:14.0px;height:14.0px;border:1px solid #4a4a4a;background:#fff"></div>
<svg class="a" style="left:922px;top:622px" width="14" height="14"><path d="M2.6,7 L5.6,10 L11.2,3.4" stroke="#1a1a1a" stroke-width="2" fill="none"/></svg>
<div class="a" style="left:939.0px;top:621.84px;font-size:12px;line-height:14px;white-space:nowrap;color:#212121;">Show evaluation statistic</div>
<div class="a" style="left:922.0px;top:652.0px;width:14.0px;height:14.0px;border:1px solid #4a4a4a;background:#fff"></div>
<div class="a" style="left:939.0px;top:651.24px;font-size:12px;line-height:14px;white-space:nowrap;color:#212121;">Show last N episodes</div>
<div class="a" style="left:1066.0px;top:647.0px;width:114.0px;height:23.0px;border:1px solid #d0d0d0;background:#f4f4f4"></div>
<div class="a" style="left:1066px;top:651.84px;width:108.5px;text-align:right;font-size:12px;line-height:14px;color:#a8a8a8">5000</div>
<div class="a" style="left:911.0px;top:691.0px;width:280.0px;height:102.0px;border:1px solid #828282"></div>
<div class="a" style="left:917.0px;top:697.0px;width:268.0px;height:90.0px;background:#fff"></div>
<svg class="a" style="left:911px;top:691px" width="280" height="102" viewBox="911 691 280 102"><line x1="970.4" y1="742.5" x2="1131.2" y2="742.5" stroke="#EDB120" stroke-width="1.3"/><path d="M1046,742.5 L1055,742.5 M1050.5,738 L1050.5,747 M1047.2,739.2 L1053.8,745.8 M1047.2,745.8 L1053.8,739.2" stroke="#D1008B" stroke-width="1.1"/></svg>
  <!-- vertical separator -->
  <div class="a" style="left:900px;top:59px;width:1px;height:792px;background:#bdbdbd"></div>

  <!-- status bar -->
  <div class="a" style="left:0;top:827px;width:900px;height:1px;background:#8a8a8a"></div>
  <div class="a" style="left:901px;top:827px;width:301px;height:1px;background:#c0c0c0"></div>
  <div class="a" style="left:0;top:828px;width:900px;height:23px;background:#e6e6e6"></div>
  <div class="a" style="left:901px;top:828px;width:301px;height:23px;background:#e6e6e6"></div>
  <svg class="a" style="left:1183px;top:831px" width="14" height="16"><polygon points="2.8,2 10,7.5 2.8,13.5" fill="#8f8f8f"/><rect x="10" y="2" width="2" height="12" fill="#8f8f8f"/></svg>

  <!-- window border -->
  <div class="a" style="left:0;top:0;width:1202px;height:851px;border:1px solid #a8a8a8;border-radius:8px;pointer-events:none"></div>
</div>
</body></html>
